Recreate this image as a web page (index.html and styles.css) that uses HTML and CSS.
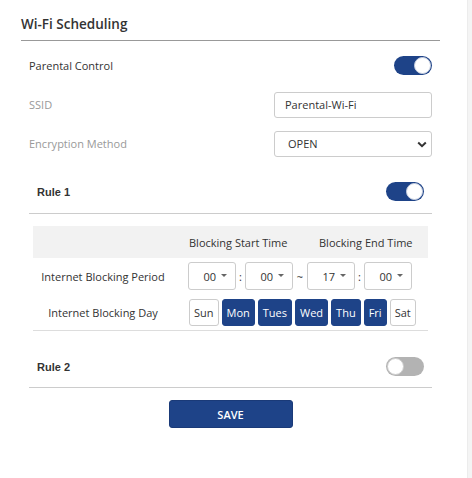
FILE: index.html
```html
<!DOCTYPE html>
<html>
<head>
<meta charset="utf-8">
<link rel="stylesheet" href="styles.css">
</head>
<body>
<div class="page">
  <div class="card">
    <div class="title">Wi-Fi Scheduling</div>
    <div class="form">
      <div class="row">
        <span class="label">Parental Control</span>
        <span class="toggle on"></span>
      </div>
      <div class="row">
        <span class="label muted">SSID</span>
        <div class="input">Parental-Wi-Fi</div>
      </div>
      <div class="row">
        <span class="label muted">Encryption Method</span>
        <div class="input select">OPEN
          <svg class="chev" width="10" height="7" viewBox="0 0 10 7"><polyline points="1.2,1.5 5,5.2 8.8,1.5" fill="none" stroke="#333" stroke-width="2"/></svg>
        </div>
      </div>
      <div class="rule-head">
        <span class="rule-name">Rule 1</span>
        <span class="toggle on small"></span>
      </div>
      <div class="sched">
        <div class="sched-head">
          <span class="sh-spacer"></span>
          <span class="sh-cell">Blocking Start Time</span>
          <span class="sh-cell">Blocking End Time</span>
        </div>
        <div class="sched-row">
          <span class="sr-label">Internet Blocking Period</span>
          <div class="times">
            <div class="tsel">00<span class="caret"></span></div>
            <span class="sep">:</span>
            <div class="tsel">00<span class="caret"></span></div>
            <span class="sep tilde">~</span>
            <div class="tsel">17<span class="caret"></span></div>
            <span class="sep">:</span>
            <div class="tsel">00<span class="caret"></span></div>
          </div>
        </div>
        <div class="sched-row last">
          <span class="sr-label">Internet Blocking Day</span>
          <div class="days">
            <span class="day">Sun</span>
            <span class="day active">Mon</span>
            <span class="day active">Tues</span>
            <span class="day active">Wed</span>
            <span class="day active">Thu</span>
            <span class="day active">Fri</span>
            <span class="day">Sat</span>
          </div>
        </div>
      </div>
      <div class="rule-head rule2">
        <span class="rule-name">Rule 2</span>
        <span class="toggle off small"></span>
      </div>
      <div class="actions">
        <button class="save">SAVE</button>
      </div>
    </div>
  </div>
  <div class="strip"></div>
</div>
</body>
</html>
```
FILE: styles.css
```css
html, body {
  margin: 0;
  padding: 0;
  background: #ffffff;
}
body {
  font-family: "Open Sans", "Noto Sans", sans-serif;
  font-size: 11px;
  color: #333;
}
.page {
  display: flex;
  width: 472px;
  height: 478px;
}
.card {
  width: 467px;
  padding-left: 21px;
  box-sizing: border-box;
  flex-shrink: 0;
}
.strip {
  flex: 1;
  background: #f4f4f4;
  border-left: 1px solid #ececec;
}
.title {
  width: 419px;
  height: 41px;
  box-sizing: border-box;
  border-bottom: 1px solid #999;
  font-size: 13.5px;
  font-weight: 600;
  color: #333;
  padding-top: 14px;
  line-height: 20px;
}
.form {
  width: 403px;
  margin-left: 8px;
  padding-top: 5px;
}
.row {
  height: 39px;
  display: flex;
  align-items: center;
  justify-content: space-between;
}
.label { color: #333; }
.label.muted { color: #999; }
.toggle {
  width: 38px;
  height: 19px;
  border-radius: 10px;
  background: #1e4388;
  position: relative;
  box-sizing: border-box;
}
.toggle::after {
  content: "";
  position: absolute;
  top: 1px;
  width: 17px;
  height: 17px;
  border-radius: 50%;
  background: #fff;
  box-sizing: border-box;
  border: 1px solid #c8d0e0;
}
.toggle.on::after { right: 1px; }
.toggle.off { background: #b3b3b3; }
.toggle.off::after { left: 1px; border-color: #ccc; }
.input {
  width: 158px;
  height: 26px;
  box-sizing: border-box;
  border: 1px solid #ccc;
  border-radius: 3px;
  padding-left: 10px;
  display: flex;
  align-items: center;
  color: #333;
}
.select {
  padding-left: 13px;
  position: relative;
}
.chev {
  position: absolute;
  right: 4px;
  top: 9px;
}
.rule-head {
  margin-top: 4px;
  height: 47px;
  box-sizing: border-box;
  border-bottom: 1px solid #ccc;
  display: flex;
  align-items: center;
  justify-content: space-between;
  padding: 2px 8px 0;
}
.rule-name {
  font-family: "Liberation Sans", Arial, sans-serif;
  font-weight: bold;
  font-size: 11px;
  color: #333;
  padding-top: 2px;
}
.sched {
  margin: 12px 4px 0;
  border-bottom: 1px solid #ddd;
}
.sched-head {
  height: 32px;
  background: #f2f2f2;
  display: flex;
  align-items: center;
}
.sh-spacer { width: 155px; flex-shrink: 0; }
.sh-cell {
  width: 130px;
  flex-shrink: 0;
  padding-left: 1px;
  box-sizing: border-box;
  color: #333;
}
.sched-row {
  height: 36px;
  display: flex;
  align-items: center;
}
.sr-label {
  width: 140px;
  flex-shrink: 0;
  text-align: center;
  color: #333;
  margin-right: 15px;
}
.times {
  display: flex;
  align-items: center;
}
.tsel {
  width: 48px;
  height: 28px;
  box-sizing: border-box;
  border: 1px solid #ccc;
  border-radius: 3px;
  display: flex;
  align-items: center;
  justify-content: flex-end;
  padding-right: 8px;
  color: #333;
}
.caret {
  width: 0;
  height: 0;
  border-left: 3px solid transparent;
  border-right: 3px solid transparent;
  border-top: 3px solid #666;
  margin-left: 5px;
  margin-top: -1px;
}
.sep {
  width: 9px;
  text-align: center;
  color: #333;
}
.tilde { width: 14px; }
.days {
  display: flex;
  gap: 3px;
  margin-left: 1px;
}
.day {
  height: 27px;
  box-sizing: border-box;
  border: 1px solid #ccc;
  border-radius: 3px;
  padding: 0 4px;
  display: flex;
  align-items: center;
  justify-content: center;
  color: #333;
  background: #fff;
  font-size: 11px;
}
.day.active {
  background: #1e4388;
  border-color: #1e4388;
  color: #fff;
}
.rule2 {
  margin-top: 12px;
  height: 45px;
}
.actions {
  display: flex;
  justify-content: center;
  padding-top: 12px;
}
.save {
  width: 124px;
  height: 28px;
  background: #1e4388;
  border: 1px solid #1a3a78;
  border-radius: 3px;
  color: #fff;
  font-family: "Open Sans", "Noto Sans", sans-serif;
  font-size: 11px;
  font-weight: 600;
  padding: 0;
}
```
